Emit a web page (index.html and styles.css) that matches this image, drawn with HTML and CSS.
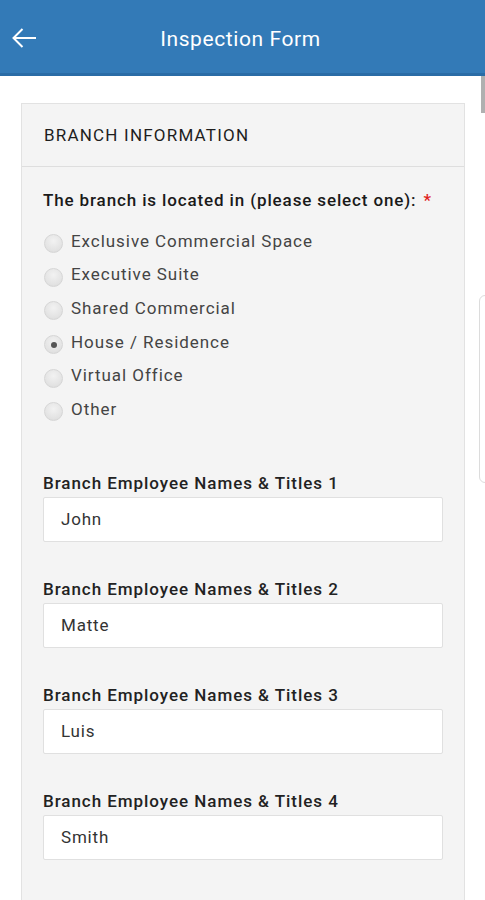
FILE: index.html
```html
<!DOCTYPE html>
<html>
<head>
<meta charset="utf-8">
<link rel="stylesheet" href="styles.css">
</head>
<body>
<header class="appbar">
  <div class="appbar-left">
    <svg class="back" width="26" height="22" viewBox="0 0 26 22"><path d="M25 11H2.5M11.5 2L2.5 11L11.5 20" fill="none" stroke="#fff" stroke-width="2"/></svg>
  </div>
  <h1 class="title">Inspection Form</h1>
  <div class="appbar-right"></div>
</header>
<div class="scroll-thumb"></div>
<div class="side-tab"></div>
<main class="content">
  <section class="panel">
    <div class="panel-heading">BRANCH INFORMATION</div>
    <div class="panel-body">
      <p class="question">The branch is located in (please select one): <span class="req">*</span></p>
      <ul class="radios">
        <li class="radio"><span class="dot"></span>Exclusive Commercial Space</li>
        <li class="radio"><span class="dot"></span>Executive Suite</li>
        <li class="radio"><span class="dot"></span>Shared Commercial</li>
        <li class="radio"><span class="dot checked"></span>House / Residence</li>
        <li class="radio"><span class="dot"></span>Virtual Office</li>
        <li class="radio"><span class="dot"></span>Other</li>
      </ul>
      <div class="field">
        <label class="label">Branch Employee Names &amp; Titles 1</label>
        <div class="input">John</div>
      </div>
      <div class="field">
        <label class="label">Branch Employee Names &amp; Titles 2</label>
        <div class="input">Matte</div>
      </div>
      <div class="field">
        <label class="label">Branch Employee Names &amp; Titles 3</label>
        <div class="input">Luis</div>
      </div>
      <div class="field">
        <label class="label">Branch Employee Names &amp; Titles 4</label>
        <div class="input">Smith</div>
      </div>
    </div>
  </section>
</main>
</body>
</html>
```
FILE: styles.css
```css
html, body {
  margin: 0;
  padding: 0;
  background: #ffffff;
  font-family: Roboto, "Liberation Sans", sans-serif;
  color: #222;
  height: 900px;
  overflow: hidden;
}
.appbar {
  height: 73px;
  background: #337ab7;
  border-bottom: 3px solid #2a6ca6;
  display: grid;
  grid-template-columns: 1fr auto 1fr;
  align-items: center;
}
.appbar-left {
  display: flex;
  align-items: center;
  padding-left: 11px;
  padding-top: 3px;
}
.back { display: block; }
.title {
  margin: 0;
  color: #fff;
  font-size: 21px;
  font-weight: 400;
  letter-spacing: 0.6px;
  padding-top: 4px;
  padding-right: 4px;
}
.scroll-thumb {
  position: absolute;
  top: 76px;
  right: 0;
  width: 4px;
  height: 37px;
  background: #b0b0b0;
}
.side-tab {
  position: absolute;
  top: 295px;
  right: -6px;
  width: 10px;
  height: 186px;
  border: 1px solid #dcdcdc;
  border-radius: 6px;
  background: #fff;
}
.content {
  padding: 27px 20px 0 21px;
}
.panel {
  width: 442px;
  background: #f4f4f4;
  border: 1px solid #e2e2e2;
  height: 900px;
}
.panel-heading {
  padding: 20px 22px 20px;
  font-size: 17px;
  line-height: 22px;
  font-weight: 400;
  letter-spacing: 1.2px;
  color: #1e1e1e;
  border-bottom: 1px solid #dedede;
}
.panel-body {
  padding: 22px 22px 0 21px;
}
.question {
  margin: 0;
  font-size: 17px;
  line-height: 22px;
  font-weight: 500;
  letter-spacing: 0.87px;
  color: #1a1a1a;
}
.req { color: #e0201b; margin-left: 2px; }
.radios {
  list-style: none;
  margin: 13px 0 0;
  padding: 0;
}
.radio {
  height: 33.6px;
  display: flex;
  align-items: center;
  font-size: 17px;
  letter-spacing: 0.95px;
  color: #444;
}
.dot {
  width: 19px;
  height: 19px;
  border-radius: 50%;
  box-sizing: border-box;
  border: 1px solid #d6d6d6;
  background: radial-gradient(circle at 50% 35%, #f2f2f2 0%, #e2e2e2 70%, #d4d4d4 100%);
  margin: 6px 8px 0 1px;
  position: relative;
}
.dot.checked::after {
  content: "";
  position: absolute;
  left: 5.5px;
  top: 5.5px;
  width: 6px;
  height: 6px;
  border-radius: 50%;
  background: #555;
}
.field {
  margin-top: 46px;
}
.field + .field {
  margin-top: 36px;
}
.label {
  display: block;
  font-size: 17px;
  line-height: 22px;
  font-weight: 500;
  letter-spacing: 0.95px;
  color: #222;
  margin-bottom: 3px;
}
.input {
  box-sizing: border-box;
  height: 45px;
  width: 400px;
  background: #fff;
  border: 1px solid #e0e0e0;
  border-radius: 2px;
  padding: 0 17px;
  display: flex;
  align-items: center;
  font-size: 17px;
  letter-spacing: 0.8px;
  color: #333;
}
```
